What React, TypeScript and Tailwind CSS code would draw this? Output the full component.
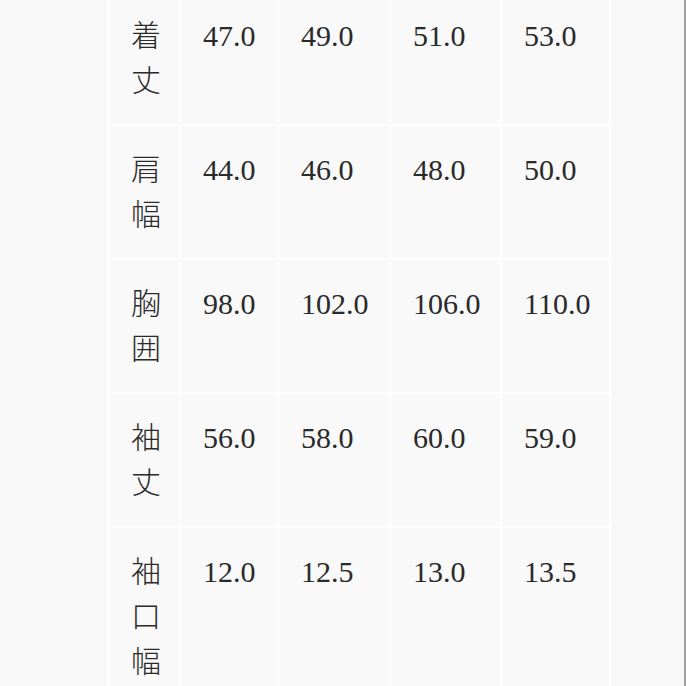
const rows: { label: string; values: string[] }[] = [
  { label: "着丈", values: ["47.0", "49.0", "51.0", "53.0"] },
  { label: "肩幅", values: ["44.0", "46.0", "48.0", "50.0"] },
  { label: "胸囲", values: ["98.0", "102.0", "106.0", "110.0"] },
  { label: "袖丈", values: ["56.0", "58.0", "60.0", "59.0"] },
  { label: "袖口幅", values: ["12.0", "12.5", "13.0", "13.5"] },
];

const colWidths = ["w-[72px]", "w-[98px]", "w-[112px]", "w-[111px]", "w-[109px]"];

export default function App() {
  return (
    <div className="h-screen w-full overflow-hidden border-r-2 border-[#a0a0a0] bg-[#f8f8f8] pl-[107px]">
      <table
        className="-mt-[10px] w-[504px] table-fixed border-collapse text-[30px] leading-[45px] text-[#2a2a2a]"
        style={{ fontFamily: '"Liberation Serif", "Noto Sans CJK JP", serif' }}
      >
        <colgroup>
          {colWidths.map((w) => (
            <col key={w} className={w} />
          ))}
        </colgroup>
        <tbody>
          {rows.map((r) => (
            <tr key={r.label}>
              <td className="border-2 border-white bg-[#f9f9f9] py-[21px] pl-[22px] pr-0 align-top font-['Noto_Sans_CJK_JP'] font-light">
                {r.label.split("").map((ch, i) => (
                  <div key={i} className="-mt-[2px] mb-[2px]">
                    {ch}
                  </div>
                ))}
              </td>
              {r.values.map((v, i) => (
                <td
                  key={i}
                  className="border-2 border-white bg-[#f9f9f9] py-[21px] pl-[22px] pr-0 align-top"
                >
                  {v}
                </td>
              ))}
            </tr>
          ))}
        </tbody>
      </table>
    </div>
  );
}
